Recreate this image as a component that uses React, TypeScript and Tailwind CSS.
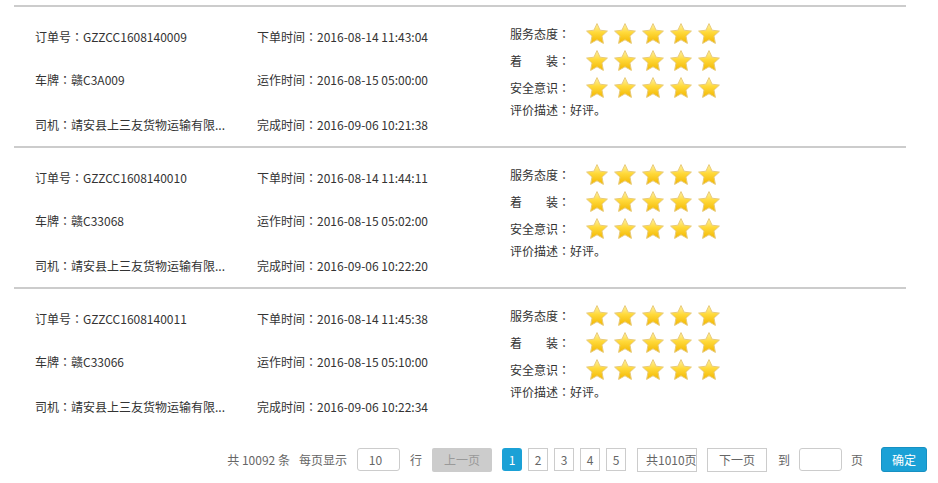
import React from "react";

const orders = [
  {
    id: "GZZCC1608140009",
    plate: "赣C3A009",
    driver: "靖安县上三友货物运输有限...",
    placed: "2016-08-14 11:43:04",
    run: "2016-08-15 05:00:00",
    done: "2016-09-06 10:21:38",
  },
  {
    id: "GZZCC1608140010",
    plate: "赣C33068",
    driver: "靖安县上三友货物运输有限...",
    placed: "2016-08-14 11:44:11",
    run: "2016-08-15 05:02:00",
    done: "2016-09-06 10:22:20",
  },
  {
    id: "GZZCC1608140011",
    plate: "赣C33066",
    driver: "靖安县上三友货物运输有限...",
    placed: "2016-08-14 11:45:38",
    run: "2016-08-15 05:10:00",
    done: "2016-09-06 10:22:34",
  },
];

const ratings = ["服务态度", "着\u3000\u3000装", "安全意识"];

// centred full-width colon, as in the reference
const Colon = () => (
  <span style={{ fontFamily: '"Noto Sans CJK TC", sans-serif' }}>：</span>
);

const Star = () => (
  <svg width="24" height="24" viewBox="0 0 24 24" className="shrink-0">
    <defs>
      <linearGradient id="starFill" x1="0" y1="0" x2="0" y2="1">
        <stop offset="0" stopColor="#fff3a6" />
        <stop offset="0.45" stopColor="#ffd93a" />
        <stop offset="1" stopColor="#f2b600" />
      </linearGradient>
    </defs>
    <polygon
      points="12,1.6 15.1,8.2 22.4,9.1 17,14.1 18.4,21.4 12,17.8 5.6,21.4 7,14.1 1.6,9.1 8.9,8.2"
      fill="url(#starFill)"
      stroke="#e9cb7a"
      strokeWidth="1"
      strokeLinejoin="round"
    />
  </svg>
);

const PageBox = ({ n, active }: { n: number; active?: boolean }) => (
  <div
    className={
      active
        ? "w-[20px] h-[23px] flex items-center justify-center rounded-[3px] bg-[#1ba1d6] text-white"
        : "w-[20px] h-[23px] flex items-center justify-center border border-[#ccc] text-[#666]"
    }
  >
    {n}
  </div>
);

export default function App() {
  return (
    <div
      className="w-[938px] h-[483px] bg-white text-[12px] text-[#333] overflow-hidden"
      style={{ fontFamily: '"Microsoft YaHei", "Noto Sans CJK SC", sans-serif' }}
    >
      <div className="pt-[5px]">
        {orders.map((o) => (
          <div
            key={o.id}
            className="ml-[14px] w-[892px] h-[141px] border-t-2 border-[#ccc] flex"
          >
            <div className="w-[243px] pl-[21px] pt-[20px] leading-[20px]">
              <div>订单号<Colon />{o.id}</div>
              <div className="mt-[23px]">车牌<Colon />{o.plate}</div>
              <div className="mt-[25px]">司机<Colon />{o.driver}</div>
            </div>
            <div className="w-[253px] pt-[20px] leading-[20px]">
              <div>下单时间<Colon />{o.placed}</div>
              <div className="mt-[23px]">运作时间<Colon />{o.run}</div>
              <div className="mt-[25px]">完成时间<Colon />{o.done}</div>
            </div>
            <div className="pt-[13px]">
              {ratings.map((r) => (
                <div key={r} className="h-[27px] flex items-center">
                  <span className="w-[75px]">
                    {r}
                    <Colon />
                  </span>
                  <div className="flex gap-[4px]">
                    {[0, 1, 2, 3, 4].map((i) => (
                      <Star key={i} />
                    ))}
                  </div>
                </div>
              ))}
              <div className="leading-[18px]">评价描述<Colon />好评。</div>
            </div>
          </div>
        ))}
      </div>

      <div className="mt-[19px] pr-[11px] flex justify-end items-center h-[25px] text-[#666]">
        <span>共 10092 条</span>
        <span className="ml-[9px]">每页显示</span>
        <div className="ml-[10px] w-[43px] h-[23px] border border-[#ccc] rounded-[3px] flex items-center justify-center pr-[6px]">
          10
        </div>
        <span className="ml-[10px]">行</span>
        <div className="ml-[10px] w-[60px] h-[24px] bg-[#ccc] rounded-[2px] flex items-center justify-center text-[#999]">
          上一页
        </div>
        <div className="ml-[10px] flex gap-[6px]">
          {[1, 2, 3, 4, 5].map((n) => (
            <PageBox key={n} n={n} active={n === 1} />
          ))}
        </div>
        <div className="ml-[11px] w-[60px] h-[24px] border border-[#ccc] flex items-center pl-[8px] overflow-hidden whitespace-nowrap">
          共1010页
        </div>
        <div className="ml-[10px] w-[60px] h-[24px] border border-[#ccc] flex items-center justify-center">
          下一页
        </div>
        <span className="ml-[11px]">到</span>
        <div className="ml-[9px] w-[43px] h-[23px] border border-[#ccc] rounded-[3px]" />
        <span className="ml-[9px]">页</span>
        <div className="ml-[18px] w-[46px] h-[25px] rounded-[3px] bg-[#1ba1d6] border border-[#1790c2] flex items-center justify-center text-white">
          确定
        </div>
      </div>
    </div>
  );
}
